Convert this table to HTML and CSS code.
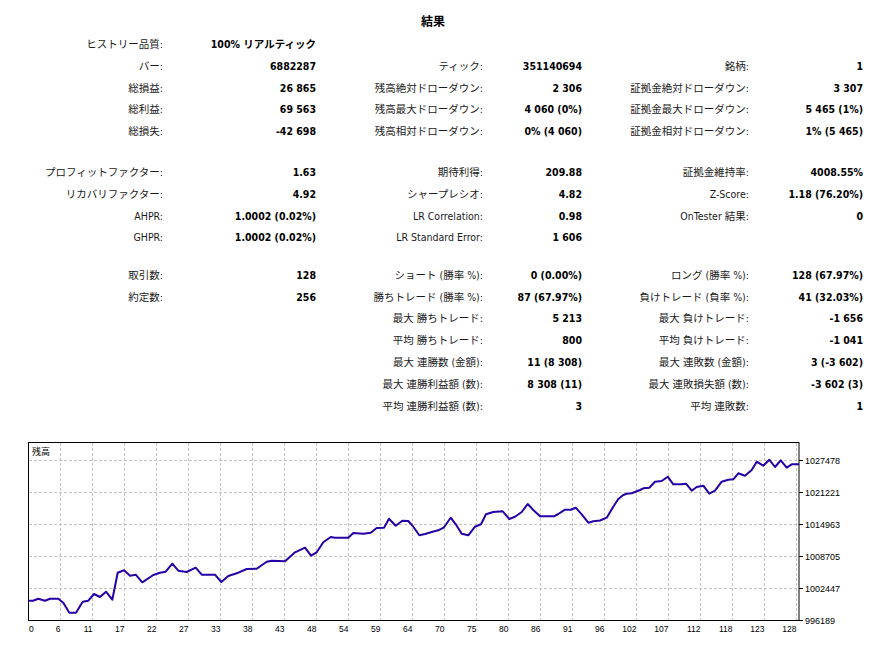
FILE: index.html
```html
<!DOCTYPE html>
<html lang="ja">
<head>
<meta charset="utf-8">
<title>結果</title>
<link rel="stylesheet" href="styles.css">
</head>
<body>
<div class="report">
  <div class="title">結果</div>
  <div class="group g1">
    <div class="row"><span class="lbl">ヒストリー品質:</span><span class="val">100% リアルティック</span><span></span><span></span><span></span><span></span></div>
    <div class="row"><span class="lbl">バー:</span><span class="val">6882287</span><span class="lbl">ティック:</span><span class="val">351140694</span><span class="lbl">銘柄:</span><span class="val">1</span></div>
    <div class="row"><span class="lbl">総損益:</span><span class="val">26 865</span><span class="lbl">残高絶対ドローダウン:</span><span class="val">2 306</span><span class="lbl">証拠金絶対ドローダウン:</span><span class="val">3 307</span></div>
    <div class="row"><span class="lbl">総利益:</span><span class="val">69 563</span><span class="lbl">残高最大ドローダウン:</span><span class="val">4 060 (0%)</span><span class="lbl">証拠金最大ドローダウン:</span><span class="val">5 465 (1%)</span></div>
    <div class="row"><span class="lbl">総損失:</span><span class="val">-42 698</span><span class="lbl">残高相対ドローダウン:</span><span class="val">0% (4 060)</span><span class="lbl">証拠金相対ドローダウン:</span><span class="val">1% (5 465)</span></div>
  </div>
  <div class="group g2">
    <div class="row"><span class="lbl">プロフィットファクター:</span><span class="val">1.63</span><span class="lbl">期待利得:</span><span class="val">209.88</span><span class="lbl">証拠金維持率:</span><span class="val">4008.55%</span></div>
    <div class="row"><span class="lbl">リカバリファクター:</span><span class="val">4.92</span><span class="lbl">シャープレシオ:</span><span class="val">4.82</span><span class="lbl">Z-Score:</span><span class="val">1.18 (76.20%)</span></div>
    <div class="row"><span class="lbl">AHPR:</span><span class="val">1.0002 (0.02%)</span><span class="lbl">LR Correlation:</span><span class="val">0.98</span><span class="lbl">OnTester 結果:</span><span class="val">0</span></div>
    <div class="row"><span class="lbl">GHPR:</span><span class="val">1.0002 (0.02%)</span><span class="lbl">LR Standard Error:</span><span class="val">1 606</span><span></span><span></span></div>
  </div>
  <div class="group g3">
    <div class="row"><span class="lbl">取引数:</span><span class="val">128</span><span class="lbl">ショート (勝率 %):</span><span class="val">0 (0.00%)</span><span class="lbl">ロング (勝率 %):</span><span class="val">128 (67.97%)</span></div>
    <div class="row"><span class="lbl">約定数:</span><span class="val">256</span><span class="lbl">勝ちトレード (勝率 %):</span><span class="val">87 (67.97%)</span><span class="lbl">負けトレード (負率 %):</span><span class="val">41 (32.03%)</span></div>
    <div class="row"><span></span><span></span><span class="lbl">最大 勝ちトレード:</span><span class="val">5 213</span><span class="lbl">最大 負けトレード:</span><span class="val">-1 656</span></div>
    <div class="row"><span></span><span></span><span class="lbl">平均 勝ちトレード:</span><span class="val">800</span><span class="lbl">平均 負けトレード:</span><span class="val">-1 041</span></div>
    <div class="row"><span></span><span></span><span class="lbl">最大 連勝数 (金額):</span><span class="val">11 (8 308)</span><span class="lbl">最大 連敗数 (金額):</span><span class="val">3 (-3 602)</span></div>
    <div class="row"><span></span><span></span><span class="lbl">最大 連勝利益額 (数):</span><span class="val">8 308 (11)</span><span class="lbl">最大 連敗損失額 (数):</span><span class="val">-3 602 (3)</span></div>
    <div class="row"><span></span><span></span><span class="lbl">平均 連勝利益額 (数):</span><span class="val">3</span><span class="lbl">平均 連敗数:</span><span class="val">1</span></div>
  </div>
</div>
<svg class="chart" width="889" height="222" viewBox="0 430 889 222" xmlns="http://www.w3.org/2000/svg">
  <g class="grid">
    <line x1="29" y1="460.5" x2="798" y2="460.5"/>
    <line x1="29" y1="492.5" x2="798" y2="492.5"/>
    <line x1="29" y1="524.5" x2="798" y2="524.5"/>
    <line x1="29" y1="556.5" x2="798" y2="556.5"/>
    <line x1="29" y1="588.5" x2="798" y2="588.5"/>
    <line x1="60.5" y1="443" x2="60.5" y2="620"/>
    <line x1="92.5" y1="443" x2="92.5" y2="620"/>
    <line x1="124.5" y1="443" x2="124.5" y2="620"/>
    <line x1="156.5" y1="443" x2="156.5" y2="620"/>
    <line x1="188.5" y1="443" x2="188.5" y2="620"/>
    <line x1="220.5" y1="443" x2="220.5" y2="620"/>
    <line x1="252.5" y1="443" x2="252.5" y2="620"/>
    <line x1="284.5" y1="443" x2="284.5" y2="620"/>
    <line x1="316.5" y1="443" x2="316.5" y2="620"/>
    <line x1="348.5" y1="443" x2="348.5" y2="620"/>
    <line x1="380.5" y1="443" x2="380.5" y2="620"/>
    <line x1="412.5" y1="443" x2="412.5" y2="620"/>
    <line x1="444.5" y1="443" x2="444.5" y2="620"/>
    <line x1="476.5" y1="443" x2="476.5" y2="620"/>
    <line x1="508.5" y1="443" x2="508.5" y2="620"/>
    <line x1="540.5" y1="443" x2="540.5" y2="620"/>
    <line x1="572.5" y1="443" x2="572.5" y2="620"/>
    <line x1="604.5" y1="443" x2="604.5" y2="620"/>
    <line x1="636.5" y1="443" x2="636.5" y2="620"/>
    <line x1="668.5" y1="443" x2="668.5" y2="620"/>
    <line x1="700.5" y1="443" x2="700.5" y2="620"/>
    <line x1="732.5" y1="443" x2="732.5" y2="620"/>
    <line x1="764.5" y1="443" x2="764.5" y2="620"/>
    <line x1="796.5" y1="443" x2="796.5" y2="620"/>
  </g>
  <g class="ticks">
    <line x1="799" y1="460.5" x2="803" y2="460.5"/>
    <line x1="799" y1="492.5" x2="803" y2="492.5"/>
    <line x1="799" y1="524.5" x2="803" y2="524.5"/>
    <line x1="799" y1="556.5" x2="803" y2="556.5"/>
    <line x1="799" y1="588.5" x2="803" y2="588.5"/>
    <line x1="799" y1="620.5" x2="803" y2="620.5"/>
  </g>
  <rect class="frame" x="28.5" y="442.5" width="770.5" height="178"/>
  <polyline class="balance" points="28,600.7 33,600.7 38.3,598.7 45,600.7 50,598.7 58.3,598.7 63.3,602.7 69.3,612.7 76,612.7 82.7,601.7 88.3,600.7 94,594 100,597 106,591.7 112.3,599.7 117.7,572.7 124,570.3 130,575.7 135.7,574.7 142.3,582.3 153.3,575 160,572.7 165.7,571.7 172.3,563.7 178.3,570.7 186.7,572 195.7,567.7 201.7,574.7 215,574.7 221.3,582 228.3,576 236.7,573.3 246.7,569 256.7,568.7 266.7,561.7 271.7,560.7 285,561.3 295,552.3 305,547.7 311,555.7 316.7,552.3 323.3,542.3 330.7,537 335,537.7 348.3,537.7 353.3,533 363.3,533.7 370.7,532.7 376.7,528 384,527.7 389,518.7 395.7,525.7 402.3,520.7 408.3,521 413.3,526.7 419.3,535.3 425,534 431.7,532 438.3,530.3 444,527.3 450.7,517.7 456.7,525.7 461.7,533.7 468.3,535.3 475,526.7 481,524.3 486,514.3 493.3,512 502.7,511.3 509.3,519 515,516.7 521.7,512 527.7,504 533.3,510 540,516.3 554,516.3 558.3,514 565,509.7 570.7,509.7 575.7,507.7 581.7,514.3 588.3,522.7 593.3,521.3 600,520.5 606.7,517.7 613.3,506.7 618.3,499 623.3,495 626.7,493.7 631.7,493.3 640,490 643.3,488.3 649.3,487.7 655,481.7 661.7,481 667.7,476.7 673.3,484.3 681.7,484.3 686,483.7 691.7,490.7 696.7,487 703.3,485.7 709.3,493.7 715,490.7 721.7,481.7 728.3,479.7 733.3,479.3 738.3,473.3 745,475.7 751.7,470 756.7,461.7 763.3,465.7 769.3,459.7 775,467 780.7,460.3 786.7,467.7 791.7,464.3 799,464.3"/>
  <text class="legend" x="32" y="455">残高</text>
  <g class="ylab">
    <text x="805" y="463.5">1027478</text>
    <text x="805" y="495.5">1021221</text>
    <text x="805" y="527.5">1014963</text>
    <text x="805" y="559.5">1008705</text>
    <text x="805" y="591.5">1002447</text>
    <text x="805" y="624">996189</text>
  </g>
  <g class="xlab">
    <text x="29" y="632" class="first">0</text>
    <text x="60.5" y="632">6</text>
    <text x="92.5" y="632">11</text>
    <text x="124.5" y="632">17</text>
    <text x="156.5" y="632">22</text>
    <text x="188.5" y="632">27</text>
    <text x="220.5" y="632">33</text>
    <text x="252.5" y="632">38</text>
    <text x="284.5" y="632">43</text>
    <text x="316.5" y="632">48</text>
    <text x="348.5" y="632">54</text>
    <text x="380.5" y="632">59</text>
    <text x="412.5" y="632">64</text>
    <text x="444.5" y="632">70</text>
    <text x="476.5" y="632">75</text>
    <text x="508.5" y="632">80</text>
    <text x="540.5" y="632">86</text>
    <text x="572.5" y="632">91</text>
    <text x="604.5" y="632">96</text>
    <text x="636.5" y="632">102</text>
    <text x="668.5" y="632">107</text>
    <text x="700.5" y="632">112</text>
    <text x="732.5" y="632">118</text>
    <text x="764.5" y="632">123</text>
    <text x="796.5" y="632">128</text>
  </g>
</svg>
</body>
</html>
```
FILE: styles.css
```css
html, body {
  margin: 0;
  padding: 0;
  background: #fff;
}
body {
  width: 889px;
  height: 652px;
  overflow: hidden;
  font-family: "DejaVu Sans Condensed", "Noto Sans CJK JP", sans-serif;
  font-size: 10.5px;
  color: #000;
}
.report {
  height: 430px;
  box-sizing: border-box;
}
.title {
  width: 866px;
  height: 34px;
  box-sizing: border-box;
  padding-top: 9px;
  line-height: 23px;
  text-align: center;
  font-family: "Noto Sans CJK JP", sans-serif;
  font-weight: bold;
  font-size: 12px;
}
.group {
  display: flex;
  flex-direction: column;
}
.g2 { margin-top: 19px; }
.g3 { margin-top: 15.6px; }
.row {
  display: grid;
  grid-template-columns: 163px 153px 167px 99px 167px 114px;
  height: 21.8px;
  line-height: 21.8px;
  white-space: nowrap;
}
.lbl {
  text-align: right;
  color: #1a1a1a;
}
.val {
  text-align: right;
  font-weight: bold;
}
.chart {
  display: block;
}
.grid line {
  stroke: #c4c4c4;
  stroke-width: 1;
  stroke-dasharray: 3 2;
}
.ticks line {
  stroke: #000;
  stroke-width: 1;
}
.frame {
  fill: none;
  stroke: #000;
  stroke-width: 1;
}
.balance {
  fill: none;
  stroke: #2600a6;
  stroke-width: 2;
  stroke-linejoin: round;
}
.legend {
  font-family: "Noto Sans CJK JP", sans-serif;
  font-size: 9px;
  fill: #000;
}
.ylab text {
  font-family: "Liberation Sans", sans-serif;
  font-size: 9px;
  fill: #000;
}
.xlab text {
  font-family: "Liberation Sans", sans-serif;
  font-size: 8.5px;
  fill: #000;
  text-anchor: end;
}
.xlab text.first {
  text-anchor: start;
}
```
